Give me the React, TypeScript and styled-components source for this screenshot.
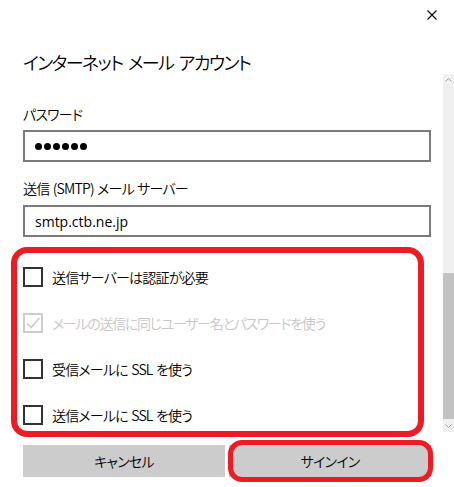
import React from "react";
import styled, { createGlobalStyle } from "styled-components";

const GlobalStyle = createGlobalStyle`
  html, body { margin: 0; padding: 0; background: #ffffff; }
  body {
    font-family: "Noto Sans CJK JP", "Noto Sans", sans-serif;
    font-feature-settings: "palt";
    font-weight: 350;
    color: #000;
  }
`;

const Dialog = styled.div`
  position: relative;
  width: 454px;
  height: 487px;
  background: #fff;
  display: flex;
  flex-direction: column;
  overflow: hidden;
`;

const Header = styled.div`
  height: 30px;
  display: flex;
  align-items: center;
  justify-content: flex-end;
  padding-right: 17px;
`;

const CloseButton = styled.button`
  width: 10px;
  height: 10px;
  padding: 0;
  border: none;
  background: transparent;
  display: flex;
  svg { display: block; }
`;

const Title = styled.h1`
  margin: 20px 0 0 23px;
  font-size: 18px;
  letter-spacing: -1.6px;
  word-spacing: 3px;
  line-height: 24px;
  height: 24px;
  font-weight: 350;
`;

const ScrollArea = styled.div`
  display: flex;
  height: 358px;
`;

const Content = styled.div`
  flex: 1;
  padding: 30px 12px 0 23px;
  display: flex;
  flex-direction: column;
`;

const Field = styled.div<{ $top?: number }>`
  display: flex;
  flex-direction: column;
  margin-top: ${(p) => p.$top ?? 0}px;
`;

const Label = styled.div<{ $gap?: number }>`
  font-size: 14px;
  letter-spacing: -0.8px;
  word-spacing: 1px;
  line-height: 20px;
  margin-bottom: ${(p) => p.$gap ?? 6}px;
`;

const Input = styled.div`
  box-sizing: border-box;
  height: 32px;
  border: 2px solid #7a7a7a;
  padding: 0 10px;
  display: flex;
  align-items: center;
  font-size: 14px;
  font-weight: 400;
  font-family: "Open Sans", "Noto Sans CJK JP", sans-serif;
`;

const Dots = styled.div`
  display: flex;
  gap: 2px;
`;

const Dot = styled.span`
  width: 7px;
  height: 7px;
  border-radius: 50%;
  background: #000;
`;

const Options = styled.div`
  margin-top: 30px;
  display: flex;
  flex-direction: column;
  gap: 26px;
`;

const CheckRow = styled.label<{ $disabled?: boolean }>`
  display: flex;
  align-items: center;
  gap: 9px;
  height: 20px;
  font-size: 14px;
  letter-spacing: ${(p) => (p.$disabled ? "-1.3px" : "-0.8px")};
  word-spacing: 1px;
  white-space: pre;
  color: ${(p) => (p.$disabled ? "#c6c6c6" : "#000")};
`;

const Box = styled.span<{ $disabled?: boolean }>`
  box-sizing: border-box;
  width: 20px;
  height: 20px;
  border: 2px solid ${(p) => (p.$disabled ? "#cccccc" : "#333333")};
  display: flex;
  align-items: center;
  justify-content: center;
  flex-shrink: 0;
`;

const Scrollbar = styled.div`
  width: 11px;
  display: flex;
  flex-direction: column;
  background: #f0f0f0;
`;

const Arrow = styled.div<{ $h: number }>`
  height: ${(p) => p.$h}px;
  display: flex;
  align-items: center;
  justify-content: center;
`;

const Track = styled.div`
  flex: 1;
  display: flex;
  flex-direction: column;
  justify-content: flex-end;
`;

const Thumb = styled.div`
  height: 146px;
  background: #c2c2c2;
`;

const Footer = styled.div`
  margin-top: 13px;
  padding-left: 23px;
  display: flex;
  gap: 4px;
`;

const Button = styled.button`
  width: 202px;
  height: 32px;
  border: none;
  background: #cccccc;
  font-family: "Noto Sans CJK JP", sans-serif;
  font-feature-settings: "palt";
  font-weight: 350;
  font-size: 14px;
  letter-spacing: -0.8px;
  color: #000;
  padding: 0;
`;

const Highlight = styled.div<{ $l: number; $t: number; $w: number; $h: number; $b: number; $r: number }>`
  position: absolute;
  left: ${(p) => p.$l}px;
  top: ${(p) => p.$t}px;
  width: ${(p) => p.$w}px;
  height: ${(p) => p.$h}px;
  box-sizing: border-box;
  border: ${(p) => p.$b}px solid #ed1c24;
  border-radius: ${(p) => p.$r}px;
  pointer-events: none;
`;

const options = [
  { text: "送信サーバーは認証が必要", disabled: false, checked: false },
  { text: "メールの送信に同じユーザー名とパスワードを使う", disabled: true, checked: true },
  { text: "受信メールに SSL を使う", disabled: false, checked: false },
  { text: "送信メールに SSL を使う", disabled: false, checked: false },
];

export default function App() {
  return (
    <>
      <GlobalStyle />
      <Dialog>
        <Header>
          <CloseButton aria-label="閉じる">
            <svg width="10" height="10" viewBox="0 0 10 10">
              <path d="M0.5 0.5 L9.5 9.5 M9.5 0.5 L0.5 9.5" stroke="#000" strokeWidth="1.1" />
            </svg>
          </CloseButton>
        </Header>
        <Title>インターネット メール アカウント</Title>
        <ScrollArea>
          <Content>
            <Field>
              <Label>パスワード</Label>
              <Input>
                <Dots>
                  {Array.from({ length: 6 }).map((_, i) => (
                    <Dot key={i} />
                  ))}
                </Dots>
              </Input>
            </Field>
            <Field $top={16}>
              <Label $gap={7}>送信 (SMTP) メール サーバー</Label>
              <Input>smtp.ctb.ne.jp</Input>
            </Field>
            <Options>
              {options.map((o) => (
                <CheckRow key={o.text} $disabled={o.disabled}>
                  <Box $disabled={o.disabled}>
                    {o.checked && (
                      <svg width="16" height="16" viewBox="0 0 16 16">
                        <path d="M2 8.5 L6 12.5 L14.5 3" fill="none" stroke="#cccccc" strokeWidth="1.6" />
                      </svg>
                    )}
                  </Box>
                  {o.text}
                </CheckRow>
              ))}
            </Options>
          </Content>
          <Scrollbar>
            <Arrow $h={12}>
              <svg width="7" height="4" viewBox="0 0 7 4">
                <path d="M0.5 3.5 L3.5 0.5 L6.5 3.5" fill="none" stroke="#a0a0a0" strokeWidth="1" />
              </svg>
            </Arrow>
            <Track>
              <Thumb />
            </Track>
            <Arrow $h={13}>
              <svg width="7" height="4" viewBox="0 0 7 4">
                <path d="M0.5 0.5 L3.5 3.5 L6.5 0.5" fill="none" stroke="#a0a0a0" strokeWidth="1" />
              </svg>
            </Arrow>
          </Scrollbar>
        </ScrollArea>
        <Footer>
          <Button>キャンセル</Button>
          <Button>サインイン</Button>
        </Footer>
        <Highlight $l={11} $t={247} $w={413} $h={190} $b={6} $r={16} />
        <Highlight $l={228} $t={440} $w={205} $h={42} $b={5} $r={14} />
      </Dialog>
    </>
  );
}
